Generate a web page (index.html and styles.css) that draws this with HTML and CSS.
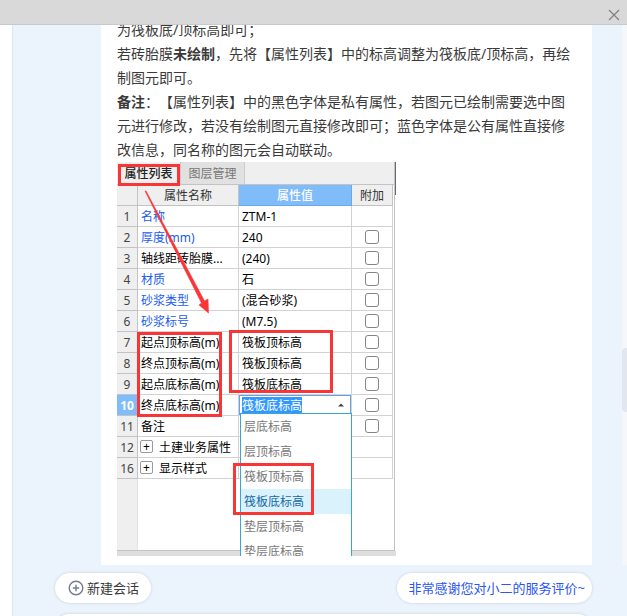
FILE: index.html
```html
<!DOCTYPE html>
<html lang="zh-CN">
<head>
<meta charset="utf-8">
<meta name="viewport" content="width=device-width, initial-scale=1">
<title>在线客服</title>
<link rel="stylesheet" href="styles.css">
</head>
<body>
<header class="titlebar">
  <button class="close" type="button" aria-label="关闭">
    <svg width="12" height="12" viewBox="0 0 12 12"><path d="M1 1L11 11M11 1L1 11" fill="none" stroke="#808080" stroke-width="1.2"/></svg>
  </button>
</header>
<main class="window">
  <section class="chat">
    <article class="message">
      <p class="text">为筏板底/顶标高即可；<br>若砖胎膜<b>未绘制</b>，先将【属性列表】中的标高调整为筏板底/顶标高，再绘制图元即可。<br><b>备注</b>：【属性列表】中的黑色字体是私有属性，若图元已绘制需要选中图元进行修改，若没有绘制图元直接修改即可；蓝色字体是公有属性直接修改信息，同名称的图元会自动联动。</p>
      <div class="capture">
        <div class="panel">
          <div class="tabs">
            <button type="button" class="tab active">属性列表</button>
            <button type="button" class="tab">图层管理</button>
          </div>
          <table class="props">
            <colgroup><col class="c-num"><col class="c-name"><col class="c-value"><col class="c-extra"></colgroup>
            <thead>
              <tr><th class="num"></th><th>属性名称</th><th class="picked">属性值</th><th>附加</th></tr>
            </thead>
            <tbody>
              <tr><td class="num">1</td><td class="public">名称</td><td>ZTM-1</td><td></td></tr>
              <tr><td class="num">2</td><td class="public">厚度(mm)</td><td>240</td><td class="check"><input type="checkbox" aria-label="厚度附加"></td></tr>
              <tr><td class="num">3</td><td>轴线距砖胎膜...</td><td>(240)</td><td class="check"><input type="checkbox" aria-label="轴线距附加"></td></tr>
              <tr><td class="num">4</td><td class="public">材质</td><td>石</td><td class="check"><input type="checkbox" aria-label="材质附加"></td></tr>
              <tr><td class="num">5</td><td class="public">砂浆类型</td><td>(混合砂浆)</td><td class="check"><input type="checkbox" aria-label="砂浆类型附加"></td></tr>
              <tr><td class="num">6</td><td class="public">砂浆标号</td><td>(M7.5)</td><td class="check"><input type="checkbox" aria-label="砂浆标号附加"></td></tr>
              <tr><td class="num">7</td><td>起点顶标高(m)</td><td>筏板顶标高</td><td class="check"><input type="checkbox" aria-label="起点顶标高附加"></td></tr>
              <tr><td class="num">8</td><td>终点顶标高(m)</td><td>筏板顶标高</td><td class="check"><input type="checkbox" aria-label="终点顶标高附加"></td></tr>
              <tr><td class="num">9</td><td>起点底标高(m)</td><td>筏板底标高</td><td class="check"><input type="checkbox" aria-label="起点底标高附加"></td></tr>
              <tr class="current"><td class="num">10</td><td>终点底标高(m)</td>
                <td class="editing">
                  <div class="combo">
                    <input type="text" class="combo-text" value="筏板底标高" aria-label="终点底标高">
                    <button type="button" class="combo-arrow" aria-label="收起"><svg width="6" height="4" viewBox="0 0 6 4"><path d="M0 3.5L3 0.5L6 3.5Z" fill="#444"/></svg></button>
                    <ul class="options">
                      <li>层底标高</li><li>层顶标高</li><li>筏板顶标高</li><li class="hover">筏板底标高</li><li>垫层顶标高</li><li>垫层底标高</li>
                    </ul>
                  </div>
                </td><td class="check"><input type="checkbox" aria-label="终点底标高附加"></td></tr>
              <tr><td class="num">11</td><td>备注</td><td></td><td class="check"><input type="checkbox" aria-label="备注附加"></td></tr>
              <tr><td class="num">12</td><td class="group"><button type="button" class="expand" aria-label="展开">+</button>土建业务属性</td><td colspan="2"></td></tr>
              <tr><td class="num">16</td><td class="group"><button type="button" class="expand" aria-label="展开">+</button>显示样式</td><td colspan="2"></td></tr>
            </tbody>
          </table>
          <div class="blank"></div>
        </div>
        <svg class="marks" width="279" height="394" viewBox="0 0 279 394">
          <g fill="none" stroke="#fa3535" stroke-width="3">
            <rect x="2.5" y="3.5" width="59" height="19"/>
            <rect x="21.5" y="171.5" width="82" height="82"/>
            <rect x="113.5" y="169.5" width="101" height="60"/>
            <rect x="117.5" y="302.5" width="78" height="49"/>
          </g>
          <path d="M28 29L29 29L87.500 139L91 137L91.500 151L82 143L84.500 141Z" fill="#fa3535" stroke="#fa3535" stroke-width="0.6"/>
        </svg>
      </div>
    </article>
    <div class="scroll"><div class="thumb"></div></div>
  </section>
  <footer class="footer">
    <div class="actions">
      <button type="button" class="pill new"><svg width="16" height="16" viewBox="0 0 16 16"><g fill="none" stroke="#737c8e" stroke-width="1.4"><circle cx="8" cy="8" r="6.8"/><path d="M8 4.8V11.2M4.8 8H11.2"/></g></svg>新建会话</button>
      <button type="button" class="pill thanks">非常感谢您对小二的服务评价~</button>
    </div>
    <input type="text" class="entry" aria-label="输入消息">
  </footer>
</main>
</body>
</html>
```

FILE: styles.css
```css
* { box-sizing: border-box; }

body {
  margin: 0;
  height: 100vh;
  display: flex;
  flex-direction: column;
  overflow: hidden;
  background: #fff;
  color: #3a3a3a;
  font: 14px/24px "Noto Sans", "Noto Sans CJK SC", sans-serif;
  text-spacing-trim: space-all;
}

button, input { font: inherit; color: inherit; padding: 0; margin: 0; border: 0; background: none; }

.titlebar {
  flex: 0 0 25px;
  display: flex;
  justify-content: flex-end;
  align-items: flex-end;
  padding: 0 7px 3px 0;
  background: #d9d9d9;
  border-bottom: 1px solid #c9c9c9;
}
.close { display: flex; width: 12px; height: 12px; }

.window {
  flex: 1;
  min-height: 0;
  display: flex;
  flex-direction: column;
  margin-left: 12px;
  border-left: 1px solid #e0e5ee;
  background: #ebf3fc;
}

.chat {
  flex: 1;
  min-height: 0;
  display: flex;
  align-items: flex-end;
  overflow: hidden;
}
.message { flex: 1; margin: 0 30px 0 88px; padding: 0 16px 9px; background: #fff; }
.text { margin: 0; }

.scroll { align-self: stretch; flex: 0 0 5px; display: flex; background: #f5f7fb; }
.thumb { flex: 1; height: 64px; margin-top: 323px; border-radius: 4px 0 0 4px; background: #e2e6ef; }

.capture {
  position: relative;
  width: 279px;
  overflow: hidden;
  padding-bottom: 5px;
  background: linear-gradient(#dededf, #dededf) bottom / 100% 5px no-repeat;
  color: #000;
  font-size: 12px;
  line-height: 18px;
}
.capture::after {
  content: "";
  position: absolute;
  top: 0;
  right: 0;
  width: 1px;
  height: 33px;
  background: #666c75;
}
.panel { margin-right: 1px; border: solid #c3c3c3; border-width: 0 1px 1px 0; }

.tabs { display: flex; height: 23px; background: #efefef; border-bottom: 1px solid #c3c3c3; }
.tab { width: 64px; height: 22px; padding-top: 2px; line-height: 20px; color: #777; background: #e1e1e1; border-right: 1px solid #ccc; }
.tab.active { color: #222; font-weight: 500; background: #efefef; }

.props { width: 276px; table-layout: fixed; border-spacing: 0; }
.c-num { width: 21px; }
.c-name { width: 101px; }
.c-value { width: 113px; }
.c-extra { width: 41px; }
.props th, .props td {
  height: 21px;
  padding: 2px 0 0 3px;
  border: solid #d2d2d2;
  border-width: 0 1px 1px 0;
  white-space: nowrap;
  text-align: left;
}
.props th { padding: 2px 0 0; text-align: center; font-weight: 400; color: #333; background: #efefef; border-color: #c3c3c3; }
.props th.picked { color: #fff; font-weight: 500; background: #80bbfa; border-color: #6ba8ea; }
.props .num { padding: 2px 0 0; text-align: center; color: #444; background: #efefef; border-color: #c3c3c3; }
.props .public { color: #1a5cf0; }
.props .current .num { color: #fff; font-weight: 700; background: #80bbfa; }
.props .check { padding: 0; }
.check input {
  display: block;
  appearance: none;
  width: 14px;
  height: 14px;
  margin: 0 auto;
  border: 1px solid #858585;
  border-radius: 3px;
  background: #fff;
}
.props .group { padding-left: 2px; }
.expand {
  width: 13px;
  height: 13px;
  margin-right: 6px;
  border: 1px solid #999;
  border-radius: 2px;
  line-height: 11px;
  vertical-align: 1px;
}
.blank { height: 71px; background: linear-gradient(90deg, #efefef 20px, #e2e2e2 20px, #e2e2e2 21px, #fff 21px); }

.props .editing { padding: 0; }
.combo { position: relative; display: flex; justify-content: space-between; align-items: center; height: 20px; padding: 0 6px 0 2px; border: 1px solid #62a3e8; }
.combo-text { width: 60px; height: 16px; padding-top: 1px; color: #fff; background: #3398fe; }
.combo-arrow { display: flex; }
.options {
  position: absolute;
  z-index: 1;
  top: 17px;
  left: 0;
  right: -2px;
  margin: 0;
  padding: 0;
  list-style: none;
  color: #777;
  background: #fff;
  border: 1px solid #3ba5d5;
}
.options li { height: 25px; padding-left: 3px; line-height: 25px; }
.options .hover { color: #1569a8; background: #daf2fb; }

.marks { position: absolute; z-index: 2; top: 0; left: 0; pointer-events: none; }

.footer { flex: 0 0 51px; padding: 8px 35px 0 42px; overflow: hidden; }
.actions { display: flex; justify-content: space-between; margin-bottom: 11px; }
.pill {
  display: flex;
  align-items: center;
  height: 30px;
  padding: 0 12px;
  border-radius: 15px;
  background: #fff;
  box-shadow: 0 0 3px rgba(60, 70, 110, 0.2);
  font-size: 13px;
}
.new { gap: 3px; padding-left: 13px; }
.thanks { padding-right: 7px; color: #2b55f5; }
.entry { display: block; width: 100%; height: 40px; border-radius: 14px; padding: 0 12px; background: #fff; box-shadow: 0 0 3px rgba(60, 70, 110, 0.2); }
```
